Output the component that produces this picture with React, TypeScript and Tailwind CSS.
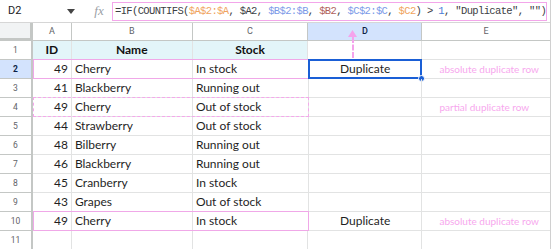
import React from "react";

const rows = [
  { id: 49, name: "Cherry", stock: "In stock", dup: "Duplicate", note: "absolute duplicate row", mark: "solid" },
  { id: 41, name: "Blackberry", stock: "Running out" },
  { id: 49, name: "Cherry", stock: "Out of stock", note: "partial duplicate row", mark: "dashed" },
  { id: 44, name: "Strawberry", stock: "Out of stock" },
  { id: 48, name: "Bilberry", stock: "Running out" },
  { id: 46, name: "Blackberry", stock: "Running out" },
  { id: 45, name: "Cranberry", stock: "In stock" },
  { id: 43, name: "Grapes", stock: "Out of stock" },
  { id: 49, name: "Cherry", stock: "In stock", dup: "Duplicate", note: "absolute duplicate row", mark: "solid" },
];

const cell = "h-[19px] border-r border-b border-[#e2e3e3] flex items-center";

const Formula = () => (
  <div className="flex-1 h-[19px] border border-[#f3a6ea] pl-[2px] overflow-hidden whitespace-pre leading-[17px] font-['Liberation_Mono',monospace] text-[10.5px] tracking-[-0.63px] text-[#3c4043]">
    {"=IF(COUNTIFS("}
    <span className="text-[#f0a35c]">$A$2:$A</span>
    {", $A2, "}
    <span className="text-[#7b9ae8]">$B$2:$B</span>
    {", "}
    <span className="text-[#b0615b]">$B2</span>
    {", "}
    <span className="text-[#7b9ae8]">$C$2:$C</span>
    {", "}
    <span className="text-[#f0a35c]">$C2</span>
    {") > "}
    <span className="text-[#4a7bd6]">1</span>
    {', "Duplicate", "")'}
  </div>
);

export default function App() {
  return (
    <div className="relative w-[551px] h-[249px] overflow-hidden bg-white border-r border-[#d0d0d0] font-['Lato','Noto_Sans',sans-serif]">
      {/* formula bar */}
      <div className="h-[23px] flex items-center border-b border-[#d6d6d6] pr-[3px]">
        <div className="w-[56px] pl-[8px] text-[11px] text-[#202124] font-['Roboto',sans-serif]">D2</div>
        <div className="w-[30px] flex justify-center">
          <svg width="8" height="5" viewBox="0 0 8 5">
            <path d="M0 0h8L4 5z" fill="#444" />
          </svg>
        </div>
        <div className="w-[26px] text-center text-[13px] italic text-[#9aa0a6] font-['Liberation_Serif',serif]">fx</div>
        <Formula />
      </div>

      {/* column headers */}
      <div className="flex h-[18px] text-[9px] text-[#5f6368] font-['Roboto',sans-serif]">
        <div className="w-[33px] bg-[#f1f3f4] border-r-[3px] border-b-[3px] border-[#c4c7c5]" />
        <div className="w-[39px] flex items-center justify-center border-r border-b border-[#c4c7c5]">A</div>
        <div className="w-[121px] flex items-center justify-center border-r border-b border-[#c4c7c5]">B</div>
        <div className="w-[116px] flex items-center justify-center border-r border-b border-[#c4c7c5]">C</div>
        <div className="w-[114px] flex items-center justify-center border-r border-b border-[#c4c7c5] bg-[#d3e3fd] text-[#0b1f44] font-medium">D</div>
        <div className="w-[128px] flex items-center justify-center border-b border-[#c4c7c5]">E</div>
      </div>

      {/* row 1: headers */}
      <div className="flex text-[12px] text-[#111]">
        <div className="w-[33px] h-[19px] flex items-center justify-center border-r-2 border-b border-[#c4c7c5] text-[8.5px] text-[#5f6368] font-['Roboto',sans-serif]">1</div>
        <div className={`${cell} w-[39px] justify-center font-bold bg-[#e3f5f9]`}>ID</div>
        <div className={`${cell} w-[121px] justify-center font-bold bg-[#e3f5f9]`}>Name</div>
        <div className={`${cell} w-[116px] justify-center font-bold bg-[#e3f5f9]`}>Stock</div>
        <div className={`${cell} w-[114px]`} />
        <div className={`${cell} w-[128px] border-r-0`} />
      </div>

      {rows.map((r, i) => (
        <div key={i} className="flex text-[12px] text-[#1f1f1f]">
          <div
            className={`w-[33px] h-[19px] flex items-center justify-center border-r-2 border-b border-[#c4c7c5] text-[8.5px] font-['Roboto',sans-serif] ${
              i === 0 ? "bg-[#d3e3fd] text-[#0b1f44] font-bold" : "text-[#5f6368]"
            }`}
          >
            {i + 2}
          </div>
          <div className="relative flex">
            <div className={`${cell} w-[39px] justify-end pr-[3px]`}>{r.id}</div>
            <div className={`${cell} w-[121px] pl-[3px]`}>{r.name}</div>
            <div className={`${cell} w-[116px] pl-[3px]`}>{r.stock}</div>
            {r.mark === "solid" && (
              <div className="absolute inset-x-0 top-[-1px] bottom-0 border border-[#f0a8e8]" />
            )}
            {r.mark === "dashed" && (
              <div className="absolute inset-x-0 top-[-1px] bottom-0 border border-dashed border-[#f5a8ec]" />
            )}
          </div>
          <div className={`${cell} relative w-[114px] justify-center`}>
            {r.dup}
            {i === 0 && (
              <>
                <div className="absolute left-[-1px] top-[-1px] right-[-1px] bottom-[-1px] border-2 border-[#1a5fd6]" />
                <div className="absolute right-[-4px] bottom-[-4px] w-[7px] h-[7px] rounded-full bg-[#1a5fd6] border border-white" />
              </>
            )}
          </div>
          <div className={`${cell} w-[128px] border-r-0 pl-[17px] text-[10px] text-[#f7a8ee]`}>{r.note}</div>
        </div>
      ))}

      {/* row 11 */}
      <div className="flex">
        <div className="w-[33px] h-[19px] flex items-center justify-center border-r-2 border-b border-[#c4c7c5] text-[8.5px] text-[#5f6368] font-['Roboto',sans-serif]">11</div>
        <div className={`${cell} w-[39px]`} />
        <div className={`${cell} w-[121px]`} />
        <div className={`${cell} w-[116px]`} />
        <div className={`${cell} w-[114px]`} />
        <div className={`${cell} w-[128px] border-r-0`} />
      </div>

      {/* arrow from formula to D column */}
      <div className="absolute left-[348px] top-[30px] flex flex-col items-center">
        <svg width="9" height="7" viewBox="0 0 9 7">
          <path d="M4.5 0L9 7H0z" fill="#f5a3ec" />
        </svg>
        <div className="h-[21px] border-l-2 border-dashed border-[#f5a3ec]" />
      </div>
    </div>
  );
}
